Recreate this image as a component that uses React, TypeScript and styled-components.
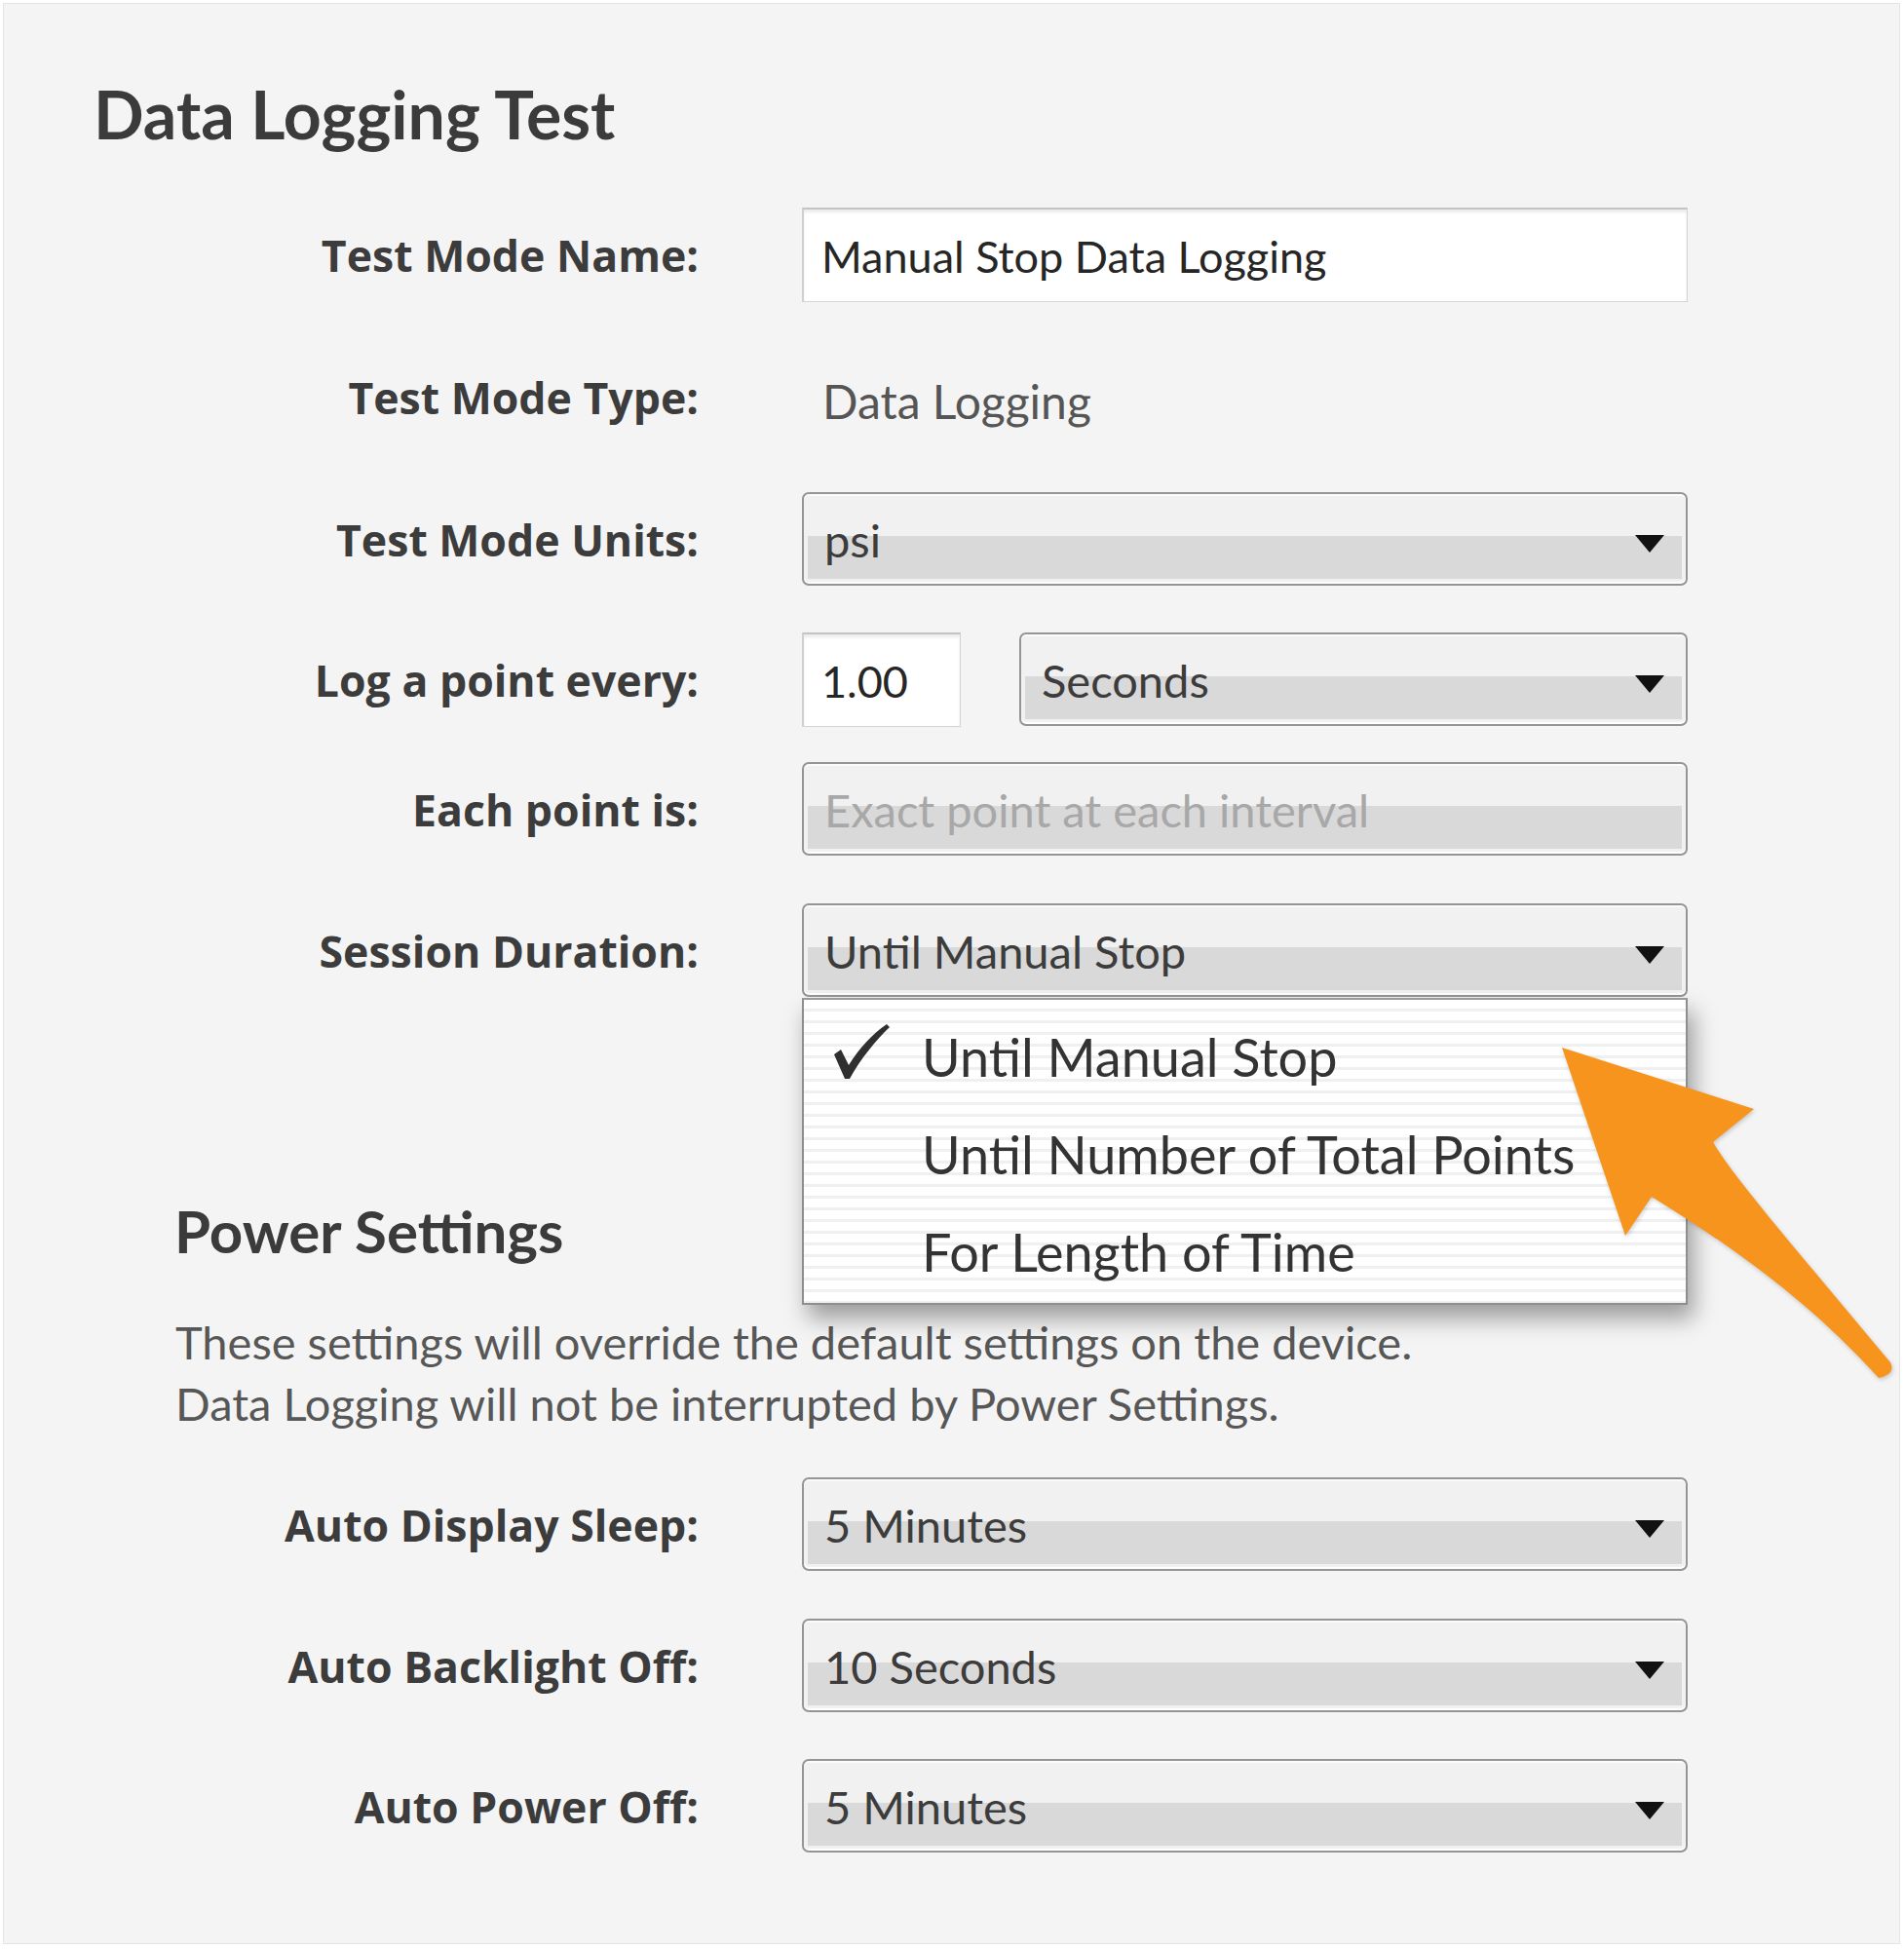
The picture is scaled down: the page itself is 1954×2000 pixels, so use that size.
import React from "react";
import styled, { createGlobalStyle } from "styled-components";

const GlobalStyle = createGlobalStyle`
  html, body { margin: 0; padding: 0; background: #ffffff; }
  * { box-sizing: border-box; }
`;

const Panel = styled.div`
  position: relative;
  margin: 3px;
  width: 1947px;
  height: 1992px;
  background: #f4f4f4;
  border: 1px solid #e4e4e4;
  padding: 79px 0 0 0;
  font-family: Lato, "Open Sans", sans-serif;
  color: #3a3a3a;
`;

const Title = styled.h1`
  margin: 0 0 0 92px;
  font-family: Lato, sans-serif;
  font-weight: 700;
  font-size: 68px;
  line-height: 68px;
  color: #3b3b3b;
`;

const FieldRow = styled.div<{ $gap: number }>`
  display: grid;
  grid-template-columns: 713px 909px;
  column-gap: 106px;
  align-items: center;
  height: 96px;
  margin-top: ${(p) => p.$gap}px;
`;

const Label = styled.div`
  text-align: right;
  font-family: "Open Sans", sans-serif;
  font-weight: 700;
  font-size: 44.6px;
  color: #3c3c3c;
  white-space: nowrap;
`;

const Control = styled.div`
  position: relative;
  display: flex;
  align-items: center;
  gap: 60px;
  height: 96px;
`;

const TextInput = styled.input<{ $width?: number }>`
  width: ${(p) => (p.$width ? `${p.$width}px` : "100%")};
  flex: ${(p) => (p.$width ? "0 0 auto" : "1 1 auto")};
  height: 97px;
  padding: 2px 0 0 18px;
  border: 1px solid #d4d4d4;
  border-top: 2px solid #c4c4c4;
  border-left: 2px solid #d0d0d0;
  background: #ffffff;
  box-shadow: inset 0 3px 3px rgba(0, 0, 0, 0.08);
  font-family: Lato, sans-serif;
  font-size: 45px;
  color: #262626;
  outline: none;
`;

const StaticValue = styled.div`
  padding: 8px 0 0 21px;
  font-family: Lato, sans-serif;
  font-size: 48px;
  color: #555555;
`;

const Select = styled.div<{ $disabled?: boolean }>`
  position: relative;
  flex: 1 1 auto;
  height: 96px;
  padding: 0 4px 5px 4px;
  border: 2px solid #959595;
  border-radius: 7px;
  background: linear-gradient(
        to bottom,
        #f1f1f1 0,
        #f1f1f1 49%,
        #d9d9d9 49%,
        #d9d9d9 100%
      )
      content-box,
    #f1f1f1;
  box-shadow: inset 0 2px 0 #fbfbfb, inset 0 -2px 0 #ffffff;
  font-family: Lato, sans-serif;
  font-size: 47px;
  color: ${(p) => (p.$disabled ? "#a8a8a8" : "#3c3c3c")};
`;

const SelectText = styled.div`
  padding: 17px 0 0 17px;
  line-height: 60px;
  white-space: nowrap;
`;

const Caret = styled.span`
  position: absolute;
  right: 22px;
  top: 42px;
  width: 0;
  height: 0;
  border-left: 15px solid transparent;
  border-right: 15px solid transparent;
  border-top: 18px solid #111111;
`;

const Menu = styled.div`
  position: absolute;
  top: 97px;
  left: 0;
  width: 909px;
  height: 315px;
  z-index: 5;
  padding-top: 9px;
  border: 2px solid #8e8e8e;
  border-top-color: #9a9a9a;
  background: repeating-linear-gradient(
    to bottom,
    #ffffff 0px,
    #ffffff 9px,
    #eef0f2 9px,
    #eef0f2 12px
  );
  box-shadow: 6px 14px 22px rgba(0, 0, 0, 0.36);
`;

const MenuItem = styled.div`
  display: flex;
  align-items: center;
  height: 100px;
  padding-left: 30px;
  font-family: Lato, sans-serif;
  font-size: 54px;
  line-height: 100px;
  color: #333333;
  white-space: nowrap;
`;

const CheckSlot = styled.span`
  display: inline-flex;
  width: 91px;
  margin-top: -12px;
`;

const SectionHeading = styled.h2`
  margin: 211px 0 0 175px;
  font-family: Lato, sans-serif;
  font-weight: 700;
  font-size: 60px;
  line-height: 58px;
  color: #3b3b3b;
`;

const Note = styled.p`
  margin: 54px 0 0 176px;
  font-family: Lato, sans-serif;
  font-size: 47px;
  line-height: 63px;
  color: #575757;
`;

const Pointer = styled.svg`
  position: absolute;
  left: 1586px;
  top: 1056px;
  width: 370px;
  height: 370px;
  z-index: 10;
  pointer-events: none;
  filter: drop-shadow(1px 2px 2px rgba(0, 0, 0, 0.18));
`;

const Check = () => (
  <svg width="58" height="56" viewBox="0 0 58 56">
    <path
      d="M1 31 L8 26 L16 42 C26 26 40 10 55 0 L58 3 C44 16 28 36 17 56 L12 56 Z"
      fill="#2f2f2f"
    />
  </svg>
);

type SelectProps = { value: string; disabled?: boolean };

const Dropdown = ({ value, disabled }: SelectProps) => (
  <Select $disabled={disabled}>
    <SelectText>{value}</SelectText>
    {!disabled && <Caret />}
  </Select>
);

export default function App() {
  return (
    <>
      <GlobalStyle />
      <Panel>
        <Title>Data Logging Test</Title>

        <FieldRow $gap={62}>
          <Label>Test Mode Name:</Label>
          <Control>
            <TextInput readOnly defaultValue="Manual Stop Data Logging" />
          </Control>
        </FieldRow>

        <FieldRow $gap={50}>
          <Label>Test Mode Type:</Label>
          <Control>
            <StaticValue>Data Logging</StaticValue>
          </Control>
        </FieldRow>

        <FieldRow $gap={50}>
          <Label>Test Mode Units:</Label>
          <Control>
            <Dropdown value="psi" />
          </Control>
        </FieldRow>

        <FieldRow $gap={48}>
          <Label>Log a point every:</Label>
          <Control>
            <TextInput readOnly defaultValue="1.00" $width={163} />
            <Dropdown value="Seconds" />
          </Control>
        </FieldRow>

        <FieldRow $gap={37}>
          <Label>Each point is:</Label>
          <Control>
            <Dropdown value="Exact point at each interval" disabled />
          </Control>
        </FieldRow>

        <FieldRow $gap={49}>
          <Label>Session Duration:</Label>
          <Control>
            <Dropdown value="Until Manual Stop" />
            <Menu>
              <MenuItem>
                <CheckSlot>
                  <Check />
                </CheckSlot>
                Until Manual Stop
              </MenuItem>
              <MenuItem>
                <CheckSlot />
                Until Number of Total Points
              </MenuItem>
              <MenuItem>
                <CheckSlot />
                For Length of Time
              </MenuItem>
            </Menu>
          </Control>
        </FieldRow>

        <SectionHeading>Power Settings</SectionHeading>
        <Note>
          These settings will override the default settings on the device.
          <br />
          Data Logging will not be interrupted by Power Settings.
        </Note>

        <FieldRow $gap={44}>
          <Label>Auto Display Sleep:</Label>
          <Control>
            <Dropdown value="5 Minutes" />
          </Control>
        </FieldRow>

        <FieldRow $gap={49}>
          <Label>Auto Backlight Off:</Label>
          <Control>
            <Dropdown value="10 Seconds" />
          </Control>
        </FieldRow>

        <FieldRow $gap={48}>
          <Label>Auto Power Off:</Label>
          <Control>
            <Dropdown value="5 Minutes" />
          </Control>
        </FieldRow>

        <Pointer viewBox="0 0 370 370">
          <path
            d="M13 15 L210 78 L168 112 C190 150 262 232 350 338 Q356 350 338 354 C262 270 182 216 105 168 L78 208 Z"
            fill="#F7941E"
          />
        </Pointer>
      </Panel>
    </>
  );
}
